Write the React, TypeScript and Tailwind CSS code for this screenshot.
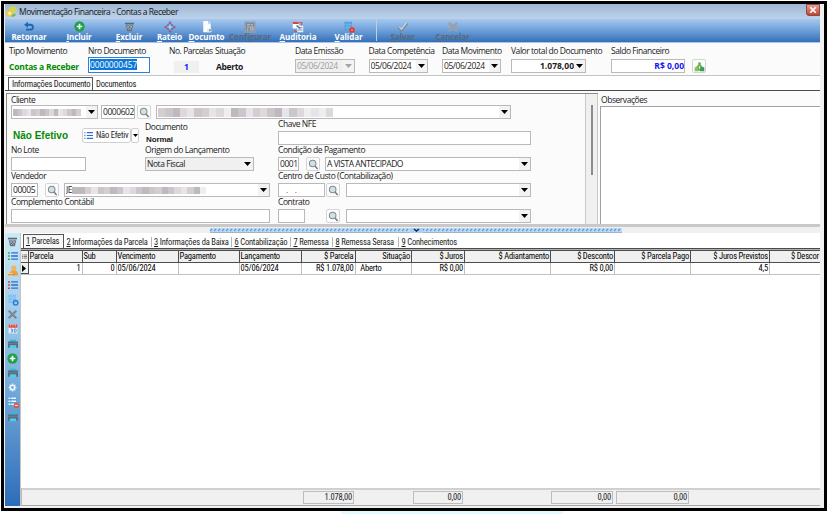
import React from "react";
import clsx from "clsx";

type Kids = { children?: React.ReactNode };

/* ---------- icons ---------- */

const Svg = ({ s = 11, children }: { s?: number } & Kids) => (
  <svg width={s} height={s} viewBox="0 0 16 16" fill="none" className="shrink-0">
    {children}
  </svg>
);
const Back = () => (
  <Svg s={12}>
    <path d="M4 5h6.5a3.3 3.3 0 0 1 0 6.5H4" stroke="#1f66ad" strokeWidth="2.400" />
    <path d="M6.500 1 1.500 5l5 4z" fill="#1f66ad" />
  </Svg>
);
const Plus = ({ s = 11 }: { s?: number }) => (
  <Svg s={s}>
    <circle cx="8" cy="8" r="7.500" fill="#1fa047" />
    <path d="M8 4v8M4 8h8" stroke="#fff" strokeWidth="2.400" />
  </Svg>
);
const Trash = ({ s = 11 }: { s?: number }) => (
  <Svg s={s}>
    <path d="M1.500 2.500h13v2.500h-13z" fill="#5d6875" />
    <path d="M2.500 6h11l-2 9h-7z" fill="#69737f" />
    <path d="m4 7 6 6M8 6l4 5M12 7l-6 6M8 6l-4 5" stroke="#a9b9c9" strokeWidth="1" />
  </Svg>
);
const Split = () => (
  <Svg s={12}>
    <path d="M8 0 5.500 3.500h5zM8 16l-2.500-3.500h5zM0 8l3.500-2.500v5zM16 8l-3.500-2.500v5z" fill="#b04a77" />
    <path d="M5 5h6v6H5z" stroke="#4c72b0" strokeWidth="1.600" />
    <path d="M8 4v8M4 8h8" stroke="#d6e5f5" strokeWidth="1" />
  </Svg>
);
const Doc = () => (
  <Svg s={12}>
    <path d="M3 0h7l3 3v12H3z" fill="#fafcff" />
    <path d="M10 0v3.500h3" stroke="#a7bdd5" />
    <path d="M8 11h6v4H8z" fill="#d9e4ee" />
    <path d="M11 10v4l3-1.500z" fill="#7192a9" />
  </Svg>
);
const Config = () => (
  <Svg s={12}>
    <path d="M1.500 1.500h13v13h-13z" fill="#7d8b99" stroke="#93a0ac" strokeWidth="2" />
    <path d="M4 5h4M4 8h3M9 5h3M9 8h3v4H9zM5 10v3" stroke="#bac3cb" strokeWidth="1.400" />
  </Svg>
);
const Audit = () => (
  <Svg s={12}>
    <path d="M1 1h8v9H1z" fill="#fff" />
    <path d="M1 1h8v3H1z" fill="#d9453d" />
    <path d="M7 6h8v9H7z" fill="#e9f0f6" />
    <path d="M8 9h6M8 12h6" stroke="#5a7ea3" />
    <path d="M10 2h3v4M4 12v2h3" stroke="#e0493f" strokeWidth="1.500" />
    <path d="m6 6 5 4" stroke="#3977b5" strokeWidth="2" />
  </Svg>
);
const Validate = () => (
  <Svg s={12}>
    <path d="M2 1h10v12H2z" fill="#4f9fe0" />
    <path d="M2 5h10M2 9h10M5.500 1v12M9 1v12" stroke="#86c0ee" strokeWidth=".8" />
    <circle cx="12" cy="12" r="3.700" fill="#e3382f" />
    <circle cx="12" cy="12" r="1.200" fill="#f58d78" />
  </Svg>
);
const Check = () => (
  <Svg s={12}>
    <path d="m2 9 4 4 8-10" stroke="#77879a" strokeWidth="2.600" />
    <path d="m3 8 3 3 7-9" stroke="#c6cdd4" strokeWidth="1.800" />
  </Svg>
);
const Cross = ({ s = 12, c = "#9a9fa5" }: { s?: number; c?: string }) => (
  <Svg s={s}>
    <path d="m2.500 2.500 11 11M13.500 2.500l-11 11" stroke={c} strokeWidth="3.400" />
  </Svg>
);
const Lens = () => (
  <svg width="11" height="11" viewBox="0 0 16 16" fill="none">
    <circle cx="6.800" cy="6.500" r="4.800" fill="#d3dfe0" stroke="#7b8d90" strokeWidth="1.500" />
    <path d="m10.500 10.500 3.500 4" stroke="#7e7474" strokeWidth="2.200" />
  </svg>
);
const List = ({ a = "#35a853", s = 10, b = "#2f6fd0" }: { a?: string; b?: string; s?: number }) => (
  <Svg s={s}>
    <path d="M0 3h3M0 8h3M0 13h3" stroke={a} strokeWidth="2.400" />
    <path d="M5 3h11M5 8h11M5 13h11" stroke={b} strokeWidth="2.200" />
  </Svg>
);
const Person = () => (
  <Svg s={12}>
    <circle cx="9" cy="4" r="3.500" fill="#f0b45a" />
    <path d="M3 14c0-5 3-7 6-7s6 2 6 7z" fill="#e5a246" />
    <path d="M0 11h8v4H0z" fill="#f7d8a2" />
    <path d="M1 13h9" stroke="#c9822f" strokeWidth="1.500" />
  </Svg>
);
const TableSync = () => (
  <Svg s={12}>
    <path d="M2 1h10v11H2z" fill="#7fc0f2" />
    <path d="M2 5h10M2 9h10M7 1v11" stroke="#a5d3f5" strokeWidth=".8" />
    <circle cx="11.500" cy="11.500" r="3" stroke="#2b7fd2" strokeWidth="2" />
  </Svg>
);
const Calendar = () => (
  <Svg s={10}>
    <path d="M1 2h14v13H1z" fill="#eef5fb" />
    <path d="M1 1h14v5H1z" fill="#e8463b" />
    <path d="M4 0v4M8 0v4M12 0v4" stroke="#f9c4bd" />
    <path d="M4 8h3v2H5M7 10v3H4M10 8h3v5h-3z" stroke="#3b82cd" strokeWidth="1.300" />
  </Svg>
);
const Printer = () => (
  <Svg s={10}>
    <path d="M3 1h10v4H3z" fill="#38b8dd" />
    <path d="M0 4h16v10h-3v-4H3v4H0z" fill="#5b6b79" />
    <path d="M3 11h10v3.500H3z" fill="#42d3ec" />
    <path d="M0 7h16" stroke="#6f7b87" strokeWidth="2" />
  </Svg>
);
const Gear = () => (
  <Svg s={9}>
    <circle cx="8" cy="8" r="4" stroke="#eef7ff" strokeWidth="3" />
    <path d="M8 1v2M8 13v2M1 8h2M13 8h2M3 3l1.500 1.500M11.500 11.500 13 13M13 3l-1.500 1.500M3 13l1.500-1.500" stroke="#eef7ff" strokeWidth="2" />
  </Svg>
);
const ListRemove = () => (
  <Svg s={12}>
    <path d="M2 1h10v12H2z" fill="#5e9fdb" />
    <path d="M2 3h10M2 7h10M2 11h8" stroke="#eaf5ff" strokeWidth="2" />
    <path d="M5 1v11" stroke="#5e9fdb" />
    <circle cx="12.500" cy="12.500" r="3.500" fill="#e95136" />
    <path d="M10.500 12.500h4" stroke="#fff" strokeWidth="1.300" />
  </Svg>
);
const MoneyBag = () => (
  <svg width="11" height="11" viewBox="0 0 16 16">
    <path d="M6 2h4L9.500 5 13 9v5H3V9l3.500-4z" fill="#57a94a" />
    <path d="M1 9h5v6H1z" fill="#8bc04a" />
    <path d="M9 9h6v6H9z" fill="#3c9a58" />
    <path d="M8 7v5M6.500 9h3" stroke="#e4f5cf" strokeWidth="1.200" />
  </svg>
);
const AppIcon = () => (
  <svg width="12" height="12" viewBox="0 0 16 16">
    <path d="m5 2 7-2 4 5-5 5-6-3z" fill="#cbd94a" />
    <path d="m1 8 5-3 5 4-4 6-6-3z" fill="#e8c93f" />
    <path d="m3 9 4-2 2 3-3 3z" fill="#f8efa0" />
    <path d="m9 12 5-2v3l-5 2z" fill="#7db050" />
  </svg>
);

/* ---------- controls ---------- */

const Label = ({ children, className }: Kids & { className?: string }) => (
  <div className={clsx("h-3 whitespace-nowrap text-[8.500px] leading-[10px] tracking-[-0.450px]", className)}>{children}</div>
);
const Arrow = ({ dim }: { dim?: boolean }) => (
  <svg width="7" height="4" viewBox="0 0 7 4" className="mr-[2px] shrink-0">
    <path d="M0 0h7L3.500 4z" fill={dim ? "#a5a5a5" : "#000"} />
  </svg>
);
const Field = ({ children, className, arrow, dim }: Kids & { className?: string; arrow?: boolean; dim?: boolean }) => (
  <div
    className={clsx(
      "flex h-[14px] shrink-0 items-center overflow-hidden whitespace-nowrap border border-[#b9b9b9] pl-px text-[8.500px] leading-[12px] tracking-[-0.450px]",
      dim ? "bg-[#efefef] text-[#a0a0a0]" : className?.includes("bg-") ? "" : "bg-white",
      className,
    )}
  >
    <div className="flex min-w-0 flex-1 items-center overflow-hidden">{children}</div>
    {arrow && (
      <div className="flex h-full w-[11px] items-center justify-end bg-[#f3f3f3]">
        <Arrow dim={dim} />
      </div>
    )}
  </div>
);
const IconButton = ({ children, className }: Kids & { className?: string }) => (
  <div className={clsx("flex h-[14px] w-[14px] shrink-0 items-center justify-center rounded-[2px] border border-[#d5d5d5] bg-[#fcfcfc]", className)}>
    {children}
  </div>
);
const Tone = ["bg-[#dcd8dc]", "bg-[#cbc6cb]", "bg-[#e6e4e8]", "bg-[#bfb8be]", "bg-[#d5ced0]", "bg-[#eeeeef]"];
const Masked = ({ tones, cell, className }: { tones: string; cell: string; className?: string }) => (
  <div className={clsx("flex shrink-0", className)}>
    {tones.split("").map((t, i) => (
      <div key={i} className={clsx("h-full", cell, Tone[Number(t)])} />
    ))}
  </div>
);

/* ---------- window chrome ---------- */

const TitleBar = () => (
  <div className="flex h-[15px] shrink-0 items-center bg-gradient-to-b from-[#9fb7d3] to-[#bed2ea]">
    <AppIcon />
    <span className="ml-[2px] flex-1 whitespace-nowrap text-[8.500px] leading-[14px] tracking-[-0.450px] text-[#101820]">
      Movimentação Financeira - Contas a Receber
    </span>
    <div className="mb-[3px] flex h-[12px] w-[14px] items-center justify-center rounded-bl-[3px] border border-[#8a4a4a] bg-gradient-to-b from-[#e0a094] to-[#c0402c]">
      <Cross s={8} c="#fff" />
    </div>
  </div>
);

const tools: { w: string; icon: React.ReactNode; text: string; off?: boolean }[] = [
  { w: "w-[48px]", icon: <Back />, text: "Retornar" },
  { w: "w-[52px]", icon: <Plus />, text: "Incluir" },
  { w: "w-[48px]", icon: <Trash />, text: "Excluir" },
  { w: "w-[33px]", icon: <Split />, text: "Rateio" },
  { w: "w-[41px]", icon: <Doc />, text: "Documto" },
  { w: "w-[46px]", icon: <Config />, text: "Configurar", off: true },
  { w: "w-[50px]", icon: <Audit />, text: "Auditoria" },
  { w: "w-[51px]", icon: <Validate />, text: "Validar" },
  { w: "w-[51px]", icon: <Check />, text: "Salvar", off: true },
  { w: "w-[49px]", icon: <Cross />, text: "Cancelar", off: true },
];
const ToolBar = () => (
  <div className="flex h-[24px] shrink-0 border-b border-[#a9c6ea] bg-gradient-to-b from-[#a5c9f0] via-[#6d9fd8] to-[#3470b8]">
    {tools.map((t, i) => (
      <React.Fragment key={t.text}>
        {i === 8 && <div className="ml-[2px] mt-px h-[21px] w-px bg-[#b8d0ec]" />}
        <div className={clsx("flex h-[23px] flex-col items-center pt-[2px]", t.w)}>
          <div className="flex h-[11px] items-center">{t.icon}</div>
          <div
            className={clsx(
              "whitespace-nowrap text-[8px] font-bold leading-[9px] tracking-[-0.080px] [text-underline-offset:1px]",
              t.off ? "text-[#566880]" : "text-white",
            )}
          >
            {i === 0 ? t.text : <><span className="underline">{t.text[0]}</span>{t.text.slice(1)}</>}
          </div>
        </div>
      </React.Fragment>
    ))}
  </div>
);

const Column = ({ label, children, className }: Kids & { label: string; className: string }) => (
  <div className={clsx("flex shrink-0 flex-col pt-[3px]", className)}>
    <Label className="mb-[-1px]">{label}</Label>
    <div className="flex h-4 items-end">{children}</div>
  </div>
);
const HeaderForm = () => (
  <div className="flex h-[33px] shrink-0 border-b border-[#c4c4c4] bg-[#fbfbfb] pl-1">
    <Column label="Tipo Movimento" className="w-[79px]">
      <b className="whitespace-nowrap pb-px text-[8.500px] leading-[11px] tracking-[-0.200px] text-[#058a05]">Contas a Receber</b>
    </Column>
    <Column label="Nro Documento" className="w-[81px]">
      <div className="flex h-4 w-[62px] items-start border border-[#2a7fe0] bg-white pl-px pt-px">
        <span className="bg-[#0b78d7] text-[8.500px] leading-[11px] tracking-[-0.150px] text-white">0000000457</span>
      </div>
    </Column>
    <Column label="No. Parcelas" className="w-[46px]">
      <div className="ml-[5px] h-[12px] w-[25px] bg-[#f0f0f0] text-center text-[8.500px] font-bold leading-[12px] text-[#2020f0]">1</div>
    </Column>
    <Column label="Situação" className="w-[80px]">
      <b className="pb-px pl-px text-[8.500px] leading-[11px] tracking-[-0.350px]">Aberto</b>
    </Column>
    <Column label="Data Emissão" className="w-[73.500px]">
      <Field arrow dim className="w-[60px]">05/06/2024</Field>
    </Column>
    <Column label="Data Competência" className="w-[73.500px]">
      <Field arrow className="w-[59px]">05/06/2024</Field>
    </Column>
    <Column label="Data Movimento" className="w-[69px]">
      <Field arrow className="w-[59px]">05/06/2024</Field>
    </Column>
    <Column label="Valor total do Documento" className="w-[100px]">
      <Field arrow className="h-4 w-[75px]"><b className="flex-1 text-right tracking-normal">1.078,00</b></Field>
    </Column>
    <Column label="Saldo Financeiro" className="w-[81px]">
      <Field className="h-4 w-[74px]"><b className="flex-1 text-right tracking-normal text-[#1414f5]">R$ 0,00</b></Field>
    </Column>
    <IconButton className="mt-4"><MoneyBag /></IconButton>
  </div>
);

const narrow = "font-['Roboto','Liberation_Sans',sans-serif] text-[8.500px] tracking-[-0.200px] [font-stretch:75%]";

const MainTabs = () => (
  <div className={clsx("flex h-[15px] shrink-0 items-end border-b border-[#4a4a4a] bg-white pl-[3px] leading-[11px]", narrow)}>
    <div className="flex h-[13px] w-[85px] items-center whitespace-nowrap border border-b-0 border-[#555] bg-[#fbfbfb] pl-[3px]">
      Informações Documento
    </div>
    <div className="ml-[3px]">Documentos</div>
  </div>
);

/* ---------- document data ---------- */

const DocumentForm = () => (
  <div className="flex w-[592px] shrink-0 flex-row border-l border-t border-[#8a8a8a] bg-[#fbfbfb]">
    <div className="w-[578px] pl-[4px] pt-px">
      <Label className="h-[10px]">Cliente</Label>
      <div className="flex h-[14px]">
        <Field arrow className="w-[87px]"><Masked className="h-[7px]" cell="w-[4.500px]" tones="310214310320134" /></Field>
        <Field className="ml-[3px] w-[34px]">0000602</Field>
        <IconButton className="ml-[2px]"><Lens /></IconButton>
        <Field arrow className="ml-[5px] w-[355px]"><Masked className="h-[9px]" cell="w-[7.300px]" tones="413021420531240132105250" /></Field>
      </div>
      <div className="flex">
        <div className="w-[267px]">
          <div className="flex h-[52px]">
            <div className="w-[134px] pt-[9px]">
              <div className="flex h-[14px] items-center">
                <b className="w-[71px] whitespace-nowrap pl-[2px] pt-[2px] font-['Liberation_Sans',sans-serif] text-[10px] leading-[14px] text-[#058a05]">
                  Não Efetivo
                </b>
                <div className="flex h-[15px] w-[49px] items-center overflow-hidden rounded-[3px] border border-[#cfcfcf] bg-white pl-px">
                  <List s={9} a="#8aa8d8" />
                  <span className={clsx("ml-[3px] whitespace-nowrap leading-[12px]", narrow)}>Não Efetiv</span>
                </div>
                <div className="flex h-[15px] w-[8px] items-center justify-center rounded-[2px] border border-[#cfcfcf] bg-white">
                  <svg width="5" height="3"><path d="M0 0h5L2.500 3z" fill="#000" /></svg>
                </div>
              </div>
              <Label className="mt-[3px]">No Lote</Label>
              <Field className="w-[75px]" />
            </div>
            <div className="pt-[3px]">
              <Label>Documento</Label>
              <b className="block h-[11px] pl-px font-['Liberation_Sans',sans-serif] text-[8px] leading-[12px] tracking-[-0.100px]">Normal</b>
              <Label>Origem do Lançamento</Label>
              <Field arrow className="w-[109px] bg-[#f0f0f0]">Nota Fiscal</Field>
            </div>
          </div>
          <Label>Vendedor</Label>
          <div className="flex h-[14px]">
            <Field className="w-[27px]">00005</Field>
            <IconButton className="ml-[7px]"><Lens /></IconButton>
            <Field arrow className="ml-[5px] w-[206px]">
              <span>JE</span><Masked className="h-[7px]" cell="w-[6.400px]" tones="334214312013143102435" />
            </Field>
          </div>
          <Label>Complemento Contábil</Label>
          <Field className="w-[259px]" />
        </div>
        <div className="w-[253px]">
          <Label>Chave NFE</Label>
          <Field className="w-[253px]" />
          <Label>Condição de Pagamento</Label>
          <div className="flex">
            <Field className="w-[21px]">0001</Field>
            <IconButton className="ml-[7px]"><Lens /></IconButton>
            <Field arrow className="ml-[5px] w-[206px]">A VISTA ANTECIPADO</Field>
          </div>
          <Label>Centro de Custo (Contabilização)</Label>
          <div className="flex">
            <Field className="w-[47px]"><span className="ml-[6px] whitespace-pre text-[#7a4a5a]">.    .</span></Field>
            <IconButton className="ml-px"><Lens /></IconButton>
            <Field arrow className="ml-[6px] w-[185px]" />
          </div>
          <Label>Contrato</Label>
          <div className="flex">
            <Field className="w-[27px]" />
            <IconButton className="ml-[21px]"><Lens /></IconButton>
            <Field arrow className="ml-[6px] w-[185px]" />
          </div>
        </div>
      </div>
    </div>
    <div className="flex flex-1 justify-center border-x border-[#c8c8c8] bg-[#f0f0f0] pt-[11px]">
      <div className="h-[70px] w-[2px] bg-[#8c8c8c]" />
    </div>
  </div>
);
const Details = () => (
  <div className="flex h-[133px] shrink-0 bg-[#fbfbfb] pl-px pt-[2px]">
    <DocumentForm />
    <div className="flex flex-1 flex-col pl-[2px] pt-[2px]">
      <Label className="h-[11px] pl-px">Observações</Label>
      <div className="flex-1 border-l border-t border-[#a0a0a0] bg-white" />
    </div>
  </div>
);
const Splitter = () => (
  <div className="flex h-[9px] shrink-0 justify-center border-t-[3px] border-[#c9c9c9] bg-[#f0f0f0] pb-px pl-[6px] pt-px">
    <svg width="412" height="5">
      <defs>
        <pattern id="grip" width="4" height="4" patternUnits="userSpaceOnUse">
          <rect width="4" height="4" fill="#bcd9f6" />
          <path d="M0 3 2 1" stroke="#5d93cd" strokeWidth="1.200" />
        </pattern>
      </defs>
      <rect width="412" height="5" rx="1" fill="url(#grip)" />
      <path d="M0 4.500h412" stroke="#a5b3c3" />
      <rect x="200" width="13" height="5" fill="#a9cff5" />
      <path d="m204 1 2.500 2L209 1" stroke="#18243a" strokeWidth="1.500" fill="none" />
    </svg>
  </div>
);

/* ---------- installments ---------- */

const sideIcons = [
  <Trash s={11} />, <List />, <Person />, <List a="#e03a30" />, <TableSync />, <Cross s={11} c="#7b8893" />, <Calendar />,
  <Printer />, <Plus />, <Printer />, <Gear />, <ListRemove />, <Printer />,
];
const SideBar = () => (
  <div className="flex w-[16px] shrink-0 flex-col items-center border-r border-[#c4c4c4] bg-gradient-to-b from-[#cdeaf6] via-[#7fb4de] to-[#2d6cb8] pt-px">
    {sideIcons.map((icon, i) => (
      <div key={i} className="flex h-[14.650px] items-center justify-center">{icon}</div>
    ))}
  </div>
);

const tabs = ["Informações da Parcela", "Informações da Baixa", "Contabilização", "Remessa", "Remessa Serasa", "Conhecimentos"];
const tabKeys = ["2", "3", "6", "7", "8", "9"];
const tabWidths = ["w-[87.500px]", "w-[80.500px]", "w-[59px]", "w-[42px]", "w-[66px]", "w-[60px]"];
const GridTabs = () => (
  <div className="flex h-[16px] shrink-0 items-end border-b border-[#4a4a4a] bg-white pl-[2px] leading-[11px]">
    <div className="flex h-[14px] w-[41px] items-center whitespace-nowrap border border-b-0 border-[#555] bg-[#f7f7f7] pl-[2px]">
      <u>1</u>&nbsp;Parcelas
    </div>
    {tabs.map((t, i) => (
      <div key={t} className={clsx("mb-[1px] flex h-[10px] items-center whitespace-nowrap pl-[2.500px]", tabWidths[i], i < 5 && "border-r border-[#b5b5b5]")}>
        <u>{tabKeys[i]}</u>&nbsp;{t}
      </div>
    ))}
  </div>
);

const cols: { w: string; h: string; v: string; hr?: boolean; vr?: boolean }[] = [
  { w: "w-[54px]", h: "Parcela", v: "1", vr: true },
  { w: "w-[34px]", h: "Sub", v: "0", vr: true },
  { w: "w-[62px]", h: "Vencimento", v: "05/06/2024" },
  { w: "w-[61px]", h: "Pagamento", v: "" },
  { w: "w-[62px]", h: "Lançamento", v: "05/06/2024" },
  { w: "w-[54px]", h: "$ Parcela", v: "R$ 1.078,00", hr: true, vr: true },
  { w: "w-[56.500px]", h: "Situação", v: " Aberto", hr: true },
  { w: "w-[53px]", h: "$ Juros", v: "R$ 0,00", hr: true, vr: true },
  { w: "w-[86px]", h: "$ Adiantamento", v: "", hr: true },
  { w: "w-[64px]", h: "$ Desconto", v: "R$ 0,00", hr: true, vr: true },
  { w: "w-[76px]", h: "$ Parcela Pago", v: "", hr: true },
  { w: "w-[79px]", h: "$ Juros Previstos", v: "4,5", hr: true, vr: true },
  { w: "w-[50px]", h: "$ Descor", v: "", hr: true },
];
const Grid = () => (
  <div className="flex min-h-0 flex-1 flex-col border-t border-[#b0b0b0] bg-white text-black">
    <div className="flex h-[13px] border-y border-[#4d4d4d] bg-[#f0f0f0]">
      <div className="flex w-[7.500px] shrink-0 items-center justify-center border-r border-[#4d4d4d]">
        <List s={5} a="#444" b="#444" />
      </div>
      {cols.map((c, i) => (
        <div key={i} className={clsx("shrink-0 overflow-hidden whitespace-nowrap px-px leading-[11px]", c.w, c.hr && "text-right", i < 12 && "border-r border-[#4d4d4d]")}>
          {c.h}
        </div>
      ))}
    </div>
    <div className="flex h-[12px] border-b border-[#c0c0c0]">
      <div className="flex w-[7.500px] shrink-0 items-center justify-center border-b border-r border-[#4d4d4d] bg-[#f0f0f0]">
        <svg width="4" height="7"><path d="M0 0v7l4-3.500z" fill="#000" /></svg>
      </div>
      {cols.map((c, i) => (
        <div key={i} className={clsx("shrink-0 overflow-hidden whitespace-pre px-px leading-[11px]", c.w, c.vr && "text-right", i === 6 && "pl-[3px]", i < 12 && "border-r border-[#c0c0c0]")}>
          {c.v}
        </div>
      ))}
    </div>
  </div>
);

const totals = [
  { c: "ml-[281px] w-[51px]", v: "1.078,00" },
  { c: "ml-[59px] w-[50px]", v: "0,00" },
  { c: "ml-[88px] w-[62px]", v: "0,00" },
  { c: "ml-[3px] w-[73px]", v: "0,00" },
];
const Totals = () => (
  <div className="flex h-[18px] shrink-0 border-b border-t-2 border-l border-b-[#a9a9a9] border-l-[#bbb] border-t-[#d0d0d0] bg-[#f0f0f0] pt-px">
    {totals.map((t, i) => (
      <div key={i} className={clsx("h-[13px] shrink-0 border border-[#bdbdbd] pr-px text-right leading-[11px]", t.c)}>{t.v}</div>
    ))}
  </div>
);

export default function App() {
  return (
    <div className="h-[514px] w-[827px] overflow-hidden bg-white pl-px pt-px font-['Open_Sans','Noto_Sans',sans-serif] text-[#1c1c1c]">
      <div className="flex h-[510px] w-[826px] border-[3px] border-black bg-[#f0f0f0] pb-[2px] pl-px pr-[4px]">
        <div className="flex min-w-0 flex-1 flex-col overflow-hidden">
          <TitleBar />
          <ToolBar />
          <HeaderForm />
          <MainTabs />
          <Details />
          <Splitter />
          <div className={clsx("flex min-h-0 flex-1", narrow)}>
            <SideBar />
            <div className="flex min-w-0 flex-1 flex-col overflow-hidden">
              <GridTabs />
              <Grid />
              <Totals />
            </div>
          </div>
        </div>
      </div>
      <div className="ml-[340px] h-[3px] w-[222px] bg-[#e3fbfd]" />
    </div>
  );
}
